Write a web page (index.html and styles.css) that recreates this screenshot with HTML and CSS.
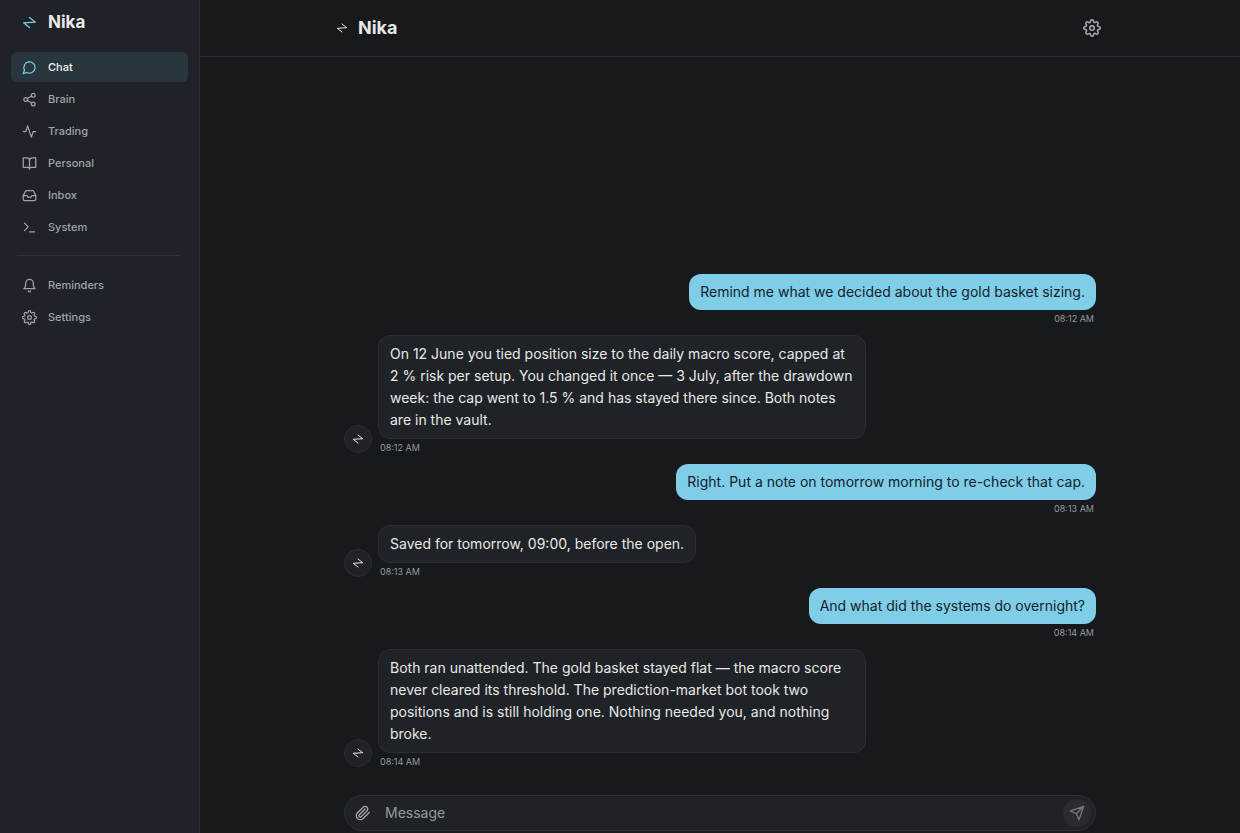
FILE: index.html
```html
<!DOCTYPE html>
<html lang="en">

<head>
    <meta charset="UTF-8">
    <meta name="viewport" content="width=device-width, initial-scale=1">
    <title>Nika</title>
    <link rel="stylesheet" href="styles.css">
</head>

<body>

    <!--Shared icon shapes-->
    <svg class="sprite" aria-hidden="true">
        <symbol id="i-logo" viewBox="0 0 24 24">
            <path d="M12 4L21.500 11.500L2.500 12.500L12 20" />
        </symbol>
        <symbol id="i-gear" viewBox="0 0 24 24">
            <circle cx="12" cy="12" r="3" />
            <path d="M19.4 15a1.65 1.65 0 0 0 .33 1.82l.06.06a2 2 0 0 1 0 2.83 2 2 0 0 1-2.83 0l-.06-.06a1.65 1.65 0 0 0-1.82-.33 1.65 1.65 0 0 0-1 1.51V21a2 2 0 0 1-2 2 2 2 0 0 1-2-2v-.09A1.65 1.65 0 0 0 9 19.400a1.65 1.65 0 0 0-1.82.33l-.06.06a2 2 0 0 1-2.83 0 2 2 0 0 1 0-2.83l.06-.06a1.65 1.65 0 0 0 .33-1.82 1.65 1.65 0 0 0-1.510-1H3a2 2 0 0 1-2-2 2 2 0 0 1 2-2h.09A1.65 1.65 0 0 0 4.600 9a1.65 1.65 0 0 0-.33-1.820l-.06-.06a2 2 0 0 1 0-2.830 2 2 0 0 1 2.830 0l.06.06a1.65 1.65 0 0 0 1.820.33H9a1.65 1.65 0 0 0 1-1.510V3a2 2 0 0 1 2-2 2 2 0 0 1 2 2v.09a1.65 1.65 0 0 0 1 1.510 1.65 1.65 0 0 0 1.820-.33l.06-.06a2 2 0 0 1 2.830 0 2 2 0 0 1 0 2.830l-.06.06a1.65 1.65 0 0 0-.33 1.820V9a1.65 1.65 0 0 0 1.510 1H21a2 2 0 0 1 2 2 2 2 0 0 1-2 2h-.09a1.65 1.65 0 0 0-1.510 1z" />
        </symbol>
    </svg>

    <div class="app">
        <aside class="sidebar">
            <a class="brand" href="#">
                <svg class="icon"><use href="#i-logo" /></svg>
                <span>Nika</span>
            </a>

            <nav class="nav" aria-label="Main">
                <a class="nav-item active" href="#" aria-current="page">
                    <svg class="icon" viewBox="0 0 24 24"><path d="M7.9 20A9 9 0 1 0 4 16.1L2 22Z" /></svg>
                    Chat
                </a>
                <a class="nav-item" href="#">
                    <svg class="icon" viewBox="0 0 24 24"><circle cx="18" cy="5" r="3" /><circle cx="6" cy="12" r="3" /><circle cx="18" cy="19" r="3" /><path d="M8.600 13.500l6.800 4M15.400 6.500l-6.800 4" /></svg>
                    Brain
                </a>
                <a class="nav-item" href="#">
                    <svg class="icon" viewBox="0 0 24 24"><path d="M22 12h-4l-3 9L9 3l-3 9H2" /></svg>
                    Trading
                </a>
                <a class="nav-item" href="#">
                    <svg class="icon" viewBox="0 0 24 24"><path d="M2 3h6a4 4 0 0 1 4 4v14a3 3 0 0 0-3-3H2zM22 3h-6a4 4 0 0 0-4 4v14a3 3 0 0 1 3-3h7z" /></svg>
                    Personal
                </a>
                <a class="nav-item" href="#">
                    <svg class="icon" viewBox="0 0 24 24"><path d="M22 12h-6l-2 3h-4l-2-3H2" /><path d="M5.450 5.110L2 12v6a2 2 0 0 0 2 2h16a2 2 0 0 0 2-2v-6l-3.450-6.890A2 2 0 0 0 16.760 4H7.240a2 2 0 0 0-1.790 1.110z" /></svg>
                    Inbox
                </a>
                <a class="nav-item" href="#">
                    <svg class="icon" viewBox="0 0 24 24"><path d="M4 17l6-6-6-6M12 19h8" /></svg>
                    System
                </a>
            </nav>

            <hr class="divider">

            <nav class="nav" aria-label="Tools">
                <a class="nav-item" href="#">
                    <svg class="icon" viewBox="0 0 24 24"><path d="M6 8a6 6 0 0 1 12 0c0 7 3 9 3 9H3s3-2 3-9M10.300 21a1.940 1.940 0 0 0 3.400 0" /></svg>
                    Reminders
                </a>
                <a class="nav-item" href="#">
                    <svg class="icon"><use href="#i-gear" /></svg>
                    Settings
                </a>
            </nav>
        </aside>

        <main class="main">
            <header class="topbar">
                <div class="topbar-inner">
                    <svg class="icon icon-small"><use href="#i-logo" /></svg>
                    <h1>Nika</h1>
                    <button class="gear" type="button" aria-label="Settings">
                        <svg class="icon icon-large"><use href="#i-gear" /></svg>
                    </button>
                </div>
            </header>

            <section class="messages" aria-label="Conversation">
                <article class="msg mine">
                    <div class="msg-body">
                        <p class="bubble">Remind me what we decided about the gold basket sizing.</p>
                        <time>08:12 AM</time>
                    </div>
                </article>

                <article class="msg">
                    <span class="avatar"><svg class="icon icon-small"><use href="#i-logo" /></svg></span>
                    <div class="msg-body">
                        <p class="bubble">On 12 June you tied position size to the daily macro score, capped at 2 % risk per setup. You changed it once — 3 July, after the drawdown week: the cap went to 1.5 % and has stayed there since. Both notes are in the vault.</p>
                        <time>08:12 AM</time>
                    </div>
                </article>

                <article class="msg mine">
                    <div class="msg-body">
                        <p class="bubble">Right. Put a note on tomorrow morning to re-check that cap.</p>
                        <time>08:13 AM</time>
                    </div>
                </article>

                <article class="msg">
                    <span class="avatar"><svg class="icon icon-small"><use href="#i-logo" /></svg></span>
                    <div class="msg-body">
                        <p class="bubble">Saved for tomorrow, 09:00, before the open.</p>
                        <time>08:13 AM</time>
                    </div>
                </article>

                <article class="msg mine">
                    <div class="msg-body">
                        <p class="bubble">And what did the systems do overnight?</p>
                        <time>08:14 AM</time>
                    </div>
                </article>

                <article class="msg">
                    <span class="avatar"><svg class="icon icon-small"><use href="#i-logo" /></svg></span>
                    <div class="msg-body">
                        <p class="bubble">Both ran unattended. The gold basket stayed flat — the macro score never cleared its threshold. The prediction-market bot took two positions and is still holding one. Nothing needed you, and nothing broke.</p>
                        <time>08:14 AM</time>
                    </div>
                </article>
            </section>

            <form class="composer" action="#">
                <button class="attach" type="button" aria-label="Attach file">
                    <svg class="icon icon-medium" viewBox="0 0 24 24"><path d="M21.440 11.050l-9.190 9.190a6 6 0 0 1-8.490-8.490l8.570-8.570A4 4 0 1 1 18 8.840l-8.590 8.570a2 2 0 0 1-2.830-2.830l8.490-8.480" /></svg>
                </button>
                <input type="text" name="message" aria-label="Message" placeholder="Message">
                <button class="send" type="submit" aria-label="Send">
                    <svg class="icon icon-medium" viewBox="0 0 24 24"><path d="M22 2L11 13M22 2l-7 20-4-9-9-4z" /></svg>
                </button>
            </form>
        </main>
    </div>

</body>

</html>
```

FILE: styles.css
```css
* {
    margin: 0;
    padding: 0;
    box-sizing: border-box;
}

body {
    background: #17191c;
    color: #e8e8e6;
    font-family: Inter, "Liberation Sans", sans-serif;
    font-size: 14px;
    line-height: 22px;
}

a {
    color: inherit;
    text-decoration: none;
}

button {
    display: flex;
    align-items: center;
    justify-content: center;
    border: none;
    background: none;
    color: inherit;
    cursor: pointer;
}

.sprite {
    display: none;
}

.icon {
    width: 15px;
    height: 15px;
    flex: none;
    fill: none;
    stroke: currentColor;
    stroke-width: 2;
    stroke-linecap: round;
    stroke-linejoin: round;
}

.icon-small {
    width: 12px;
    height: 12px;
}

.icon-medium {
    width: 16px;
    height: 16px;
}

.icon-large {
    width: 18px;
    height: 18px;
}

.app {
    display: flex;
    height: 100vh;
}

/* sidebar */
.sidebar {
    width: 200px;
    flex: none;
    padding: 11px 11px 0;
    background: #1f2229;
    border-right: 1px solid #2b2f34;
}

.brand,
.nav-item {
    display: flex;
    align-items: center;
    gap: 11px;
    padding: 0 11px;
}

.brand {
    margin-bottom: 19px;
    font-size: 17px;
    font-weight: 700;
}

.brand .icon,
.active .icon {
    color: #7fcde6;
}

.nav {
    display: flex;
    flex-direction: column;
    gap: 2px;
}

.nav-item {
    height: 30px;
    border-radius: 6px;
    color: #a0a3a7;
    font-size: 11px;
    font-weight: 500;
}

.nav-item.active {
    background: #2a363d;
    color: #f2f2f0;
}

.divider {
    margin: 13px 8px 14px 6px;
    border: none;
    border-top: 1px solid #303439;
}

/* chat column */
.main {
    flex: 1;
    min-width: 0;
    display: flex;
    flex-direction: column;
    align-items: center;
}

.topbar {
    width: 100%;
    padding: 16px;
    border-bottom: 1px solid #2b2e32;
}

.topbar-inner {
    display: flex;
    align-items: center;
    gap: 10px;
    max-width: 768px;
    height: 24px;
    margin: 0 auto;
}

.topbar h1 {
    font-size: 18px;
    font-weight: 700;
}

.gear {
    width: 24px;
    height: 24px;
    margin-left: auto;
    color: #a8abaf;
}

.messages {
    flex: 1;
    min-height: 0;
    width: 100%;
    max-width: 768px;
    padding: 0 8px 28px;
    display: flex;
    flex-direction: column;
    justify-content: flex-end;
    gap: 11px;
}

.msg {
    display: flex;
    align-items: flex-end;
    gap: 6px;
}

.msg-body {
    display: flex;
    flex-direction: column;
    align-items: flex-start;
    gap: 3px;
    max-width: 488px;
}

.bubble {
    padding: 7px 11px;
    border: 1px solid #2b2f33;
    border-radius: 12px;
    background: #1f2327;
}

.mine {
    justify-content: flex-end;
}

.mine .msg-body {
    align-items: flex-end;
}

.mine .bubble {
    border: none;
    background: #7fcde6;
    color: #14232a;
}

.msg time {
    padding: 0 2px;
    color: #96999c;
    font-size: 9px;
    line-height: 11px;
}

.avatar {
    display: flex;
    align-items: center;
    justify-content: center;
    width: 28px;
    height: 28px;
    flex: none;
    border: 1px solid #2b2f33;
    border-radius: 50%;
    background: #1f2327;
}

/* message box */
.composer {
    display: flex;
    align-items: center;
    gap: 8px;
    width: calc(100% - 16px);
    max-width: 752px;
    height: 36px;
    margin-bottom: 2px;
    padding: 0 4px;
    border: 1px solid #2e3236;
    border-radius: 18px;
    background: #1f2327;
}

.composer input {
    flex: 1;
    min-width: 0;
    border: none;
    outline: none;
    background: none;
    color: inherit;
    font: inherit;
}

.composer input::placeholder {
    color: #96999c;
    opacity: 1;
}

.attach,
.send {
    width: 28px;
    height: 28px;
    flex: none;
    border-radius: 50%;
    color: #a8abaf;
}

.send {
    background: #282b30;
    color: #73777b;
}
```
